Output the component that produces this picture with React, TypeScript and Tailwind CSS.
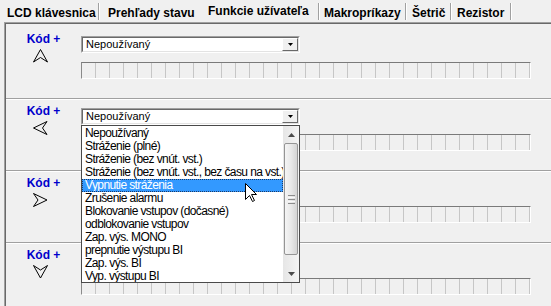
import React from "react";

const tabs = [
  { label: "LCD klávesnica", cls: "w-[98px] pl-[7px] pt-[6px]", sep: true },
  { label: "Prehľady stavu", cls: "w-[102px] pl-[8px] pt-[6px]", sep: false },
  { label: "Funkcie užívateľa", cls: "w-[116px] pl-[6px] pt-[4px]", sep: true },
  { label: "Makropríkazy", cls: "w-[85px] pl-[4px] pt-[6px]", sep: true },
  { label: "Šetrič", cls: "w-[43px] pl-[5px] pt-[6px]", sep: true },
  { label: "Rezistor", cls: "w-[58px] pl-[5px] pt-[6px]", sep: true },
];

const items = [
  "Nepoužívaný",
  "Stráženie (plné)",
  "Stráženie (bez vnút. vst.)",
  "Stráženie (bez vnút. vst., bez času na vst.)",
  "Vypnutie stráženia",
  "Zrušenie alarmu",
  "Blokovanie vstupov (dočasné)",
  "odblokovanie vstupov",
  "Zap. výs. MONO",
  "prepnutie výstupu BI",
  "Zap. výs. BI",
  "Vyp. výstupu BI",
];

type Dir = "up" | "left" | "right" | "down";
const arrowPts: Record<Dir, string> = {
  up: "7.5,0.5 14.5,13 7.5,8.5 0.5,13",
  down: "7.5,13 14.5,0.5 7.5,5 0.5,0.5",
  left: "0.5,7 14,0.5 9.5,7 14,13.5",
  right: "14,7 0.5,0.5 5,7 0.5,13.5",
};

function Arrow({ dir }: { dir: Dir }) {
  return (
    <svg width="15" height="14" viewBox="0 0 15 14" className="ml-[27px] mt-[3px] block">
      <polygon points={arrowPts[dir]} fill="none" stroke="#000" strokeWidth="1" strokeLinejoin="miter" />
    </svg>
  );
}

function Combo() {
  return (
    <div className="w-[219px] h-[17px] bg-white border border-t-[#a0a0a0] border-l-[#a0a0a0] border-b-white border-r-white">
      <div className="h-full flex border border-t-[#696969] border-l-[#696969] border-b-[#e3e3e3] border-r-[#e3e3e3]">
        <div className="flex-1 pl-[3px] text-[11px] leading-[13px] text-black whitespace-nowrap">Nepoužívaný</div>
        <div className="w-[16px] h-full bg-[#f0f0f0] border border-t-white border-l-white border-b-[#696969] border-r-[#696969] flex items-center justify-center">
          <svg width="5" height="3" viewBox="0 0 5 3" className="block">
            <polygon points="0,0 5,0 2.5,3" fill="#000" />
          </svg>
        </div>
      </div>
    </div>
  );
}

function Grid() {
  return (
    <div className="w-[450px] h-[17px] flex bg-[#f0f0f0] border border-t-[#7a7a7a] border-l-[#8a8a8a] border-b-white border-r-white">
      {Array.from({ length: 32 }).map((_, i) => (
        <div key={i} className="w-[14px] h-full shrink-0 border-r border-[#c6c6c6]" />
      ))}
    </div>
  );
}

function Section({ dir, first }: { dir: Dir; first?: boolean }) {
  return (
    <div className={first ? "flex h-[74px] pt-[4px]" : "flex h-[70px]"}>
      <div className="w-[75px] shrink-0 pt-[4px]">
        <div className="text-center text-[12px] leading-[14px] font-bold text-[#0000cc]">Kód +</div>
        <Arrow dir={dir} />
      </div>
      <div className="pt-[8px]">
        <Combo />
        <div className="mt-[9px]">
          <Grid />
        </div>
      </div>
    </div>
  );
}

function Divider() {
  return (
    <div>
      <div className="h-px bg-[#a0a0a0]" />
      <div className="h-px bg-white" />
    </div>
  );
}

function Scrollbar() {
  return (
    <div className="w-[16px] h-full shrink-0 flex flex-col bg-linear-to-r from-[#e6e6e6] to-[#f4f4f4]">
      <div className="h-[17px] shrink-0 flex items-center justify-center">
        <svg width="7" height="4" viewBox="0 0 7 4" className="block">
          <polygon points="3.5,0 7,4 0,4" fill="#4a4a4a" />
        </svg>
      </div>
      <div className="mx-[1px] h-[112px] shrink-0 rounded-[2px] border border-[#959595] bg-linear-to-r from-[#f5f5f5] via-[#e8e8e8] to-[#d4d4d4] flex flex-col items-center justify-center gap-[1px]">
        <div className="w-[7px] h-px bg-[#8c8c8c]" />
        <div className="w-[7px] h-px bg-[#f8f8f8]" />
        <div className="w-[7px] h-px bg-[#8c8c8c]" />
        <div className="w-[7px] h-px bg-[#f8f8f8]" />
        <div className="w-[7px] h-px bg-[#8c8c8c]" />
      </div>
      <div className="flex-1" />
      <div className="h-[17px] shrink-0 flex items-center justify-center">
        <svg width="7" height="4" viewBox="0 0 7 4" className="block">
          <polygon points="0,0 7,0 3.5,4" fill="#4a4a4a" />
        </svg>
      </div>
    </div>
  );
}

export default function App() {
  return (
    <div className="relative w-[551px] h-[306px] overflow-hidden bg-[#f0f0f0] text-black font-['Liberation_Sans',Arial,sans-serif]">
      {/* tab strip */}
      <div className="flex h-[22px]">
        {tabs.map((t) => (
          <React.Fragment key={t.label}>
            <div className={`${t.cls} h-full shrink-0 text-[12px] leading-[14px] font-bold whitespace-nowrap`}>{t.label}</div>
            {t.sep && (
              <div className="flex h-full shrink-0 pt-[3px] pb-[2px]">
                <div className="w-px h-full bg-[#a0a0a0]" />
                <div className="w-px h-full bg-white" />
              </div>
            )}
          </React.Fragment>
        ))}
      </div>

      {/* panel */}
      <div className="ml-[4px] border-l border-t border-[#a0a0a0]">
        <div className="border-l border-t border-[#696969]">
          <Section dir="up" first />
          <Divider />
          <Section dir="left" />
          <Divider />
          <Section dir="right" />
          <Divider />
          <Section dir="down" />
        </div>
      </div>

      {/* open dropdown list */}
      <div className="absolute left-[81px] top-[125px] w-[219px] h-[158px] bg-white border border-[#4a4a4a] flex overflow-hidden">
        <div className="flex-1 min-w-0 pt-[1px] overflow-hidden">
          {items.map((t, i) =>
            i === 4 ? (
              <div
                key={t}
                className="h-[13px] pl-[2px] text-[12px] leading-[11px] tracking-[-0.6px] text-white bg-[#3399ff] border border-dotted border-[#1d3a66] whitespace-nowrap overflow-hidden"
              >
                {t}
              </div>
            ) : (
              <div key={t} className="h-[13px] pl-[3px] text-[12px] leading-[13px] tracking-[-0.6px] text-black whitespace-nowrap overflow-hidden">
                {t}
              </div>
            )
          )}
        </div>
        <Scrollbar />
      </div>

      {/* mouse cursor */}
      <svg width="13" height="20" viewBox="0 0 13 20" className="absolute left-[245px] top-[183px]">
        <path d="M0.5,0.5 L0.5,16.5 L4.5,12.5 L7.5,18.5 L9.5,17.5 L6.5,11.5 L11.5,11.5 Z" fill="#fff" stroke="#000" strokeWidth="1" strokeLinejoin="miter" />
      </svg>
    </div>
  );
}
